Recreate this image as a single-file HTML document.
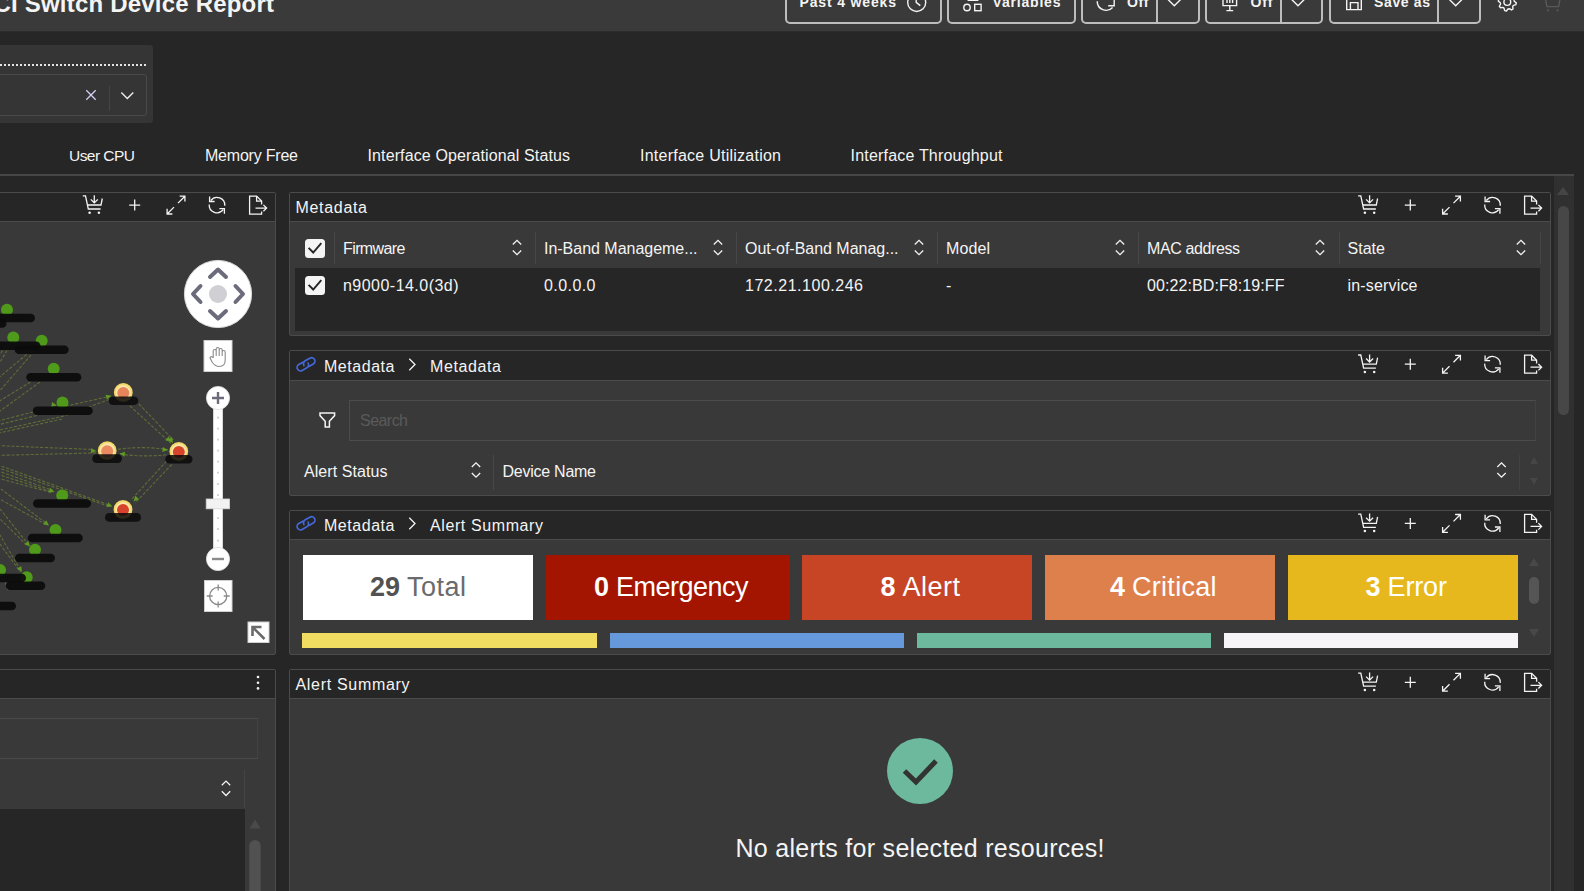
<!DOCTYPE html>
<html><head><meta charset="utf-8"><title>Switch Device Report</title>
<style>
html,body{margin:0;padding:0;background:#262626;}
body{width:1584px;height:891px;overflow:hidden;position:relative;font-family:"Liberation Sans",sans-serif;color:#f4f4f4;}
.t{position:absolute;white-space:pre;margin:0;}
.b{position:absolute;box-sizing:border-box;}
svg{position:absolute;overflow:visible;}
.ic{fill:none;stroke:#f4f4f4;stroke-width:1.25;stroke-linecap:butt;stroke-linejoin:miter;}
</style></head><body>
<div class="b" style="left:0px;top:0px;width:1584px;height:30.5px;background:#3a3a3a;"></div>
<div class="b" style="left:0px;top:30.5px;width:1584px;height:1.5px;background:linear-gradient(#303030,#262626);"></div>
<div class="t" style="left:-6.57px;top:-11.42px;font-size:24px;line-height:29px;font-weight:700;color:#f4f4f4;letter-spacing:0.205px;">CI Switch Device Report</div>
<div class="b" style="left:784.5px;top:-10px;width:157.0px;height:33.5px;border:2px solid #bdbdbd;border-radius:5px;"></div>
<div class="b" style="left:947px;top:-10px;width:128.5px;height:33.5px;border:2px solid #bdbdbd;border-radius:5px;"></div>
<div class="b" style="left:1081px;top:-10px;width:118.5px;height:33.5px;border:2px solid #bdbdbd;border-radius:5px;"></div>
<div class="b" style="left:1156px;top:-10px;width:2px;height:33px;background:#bdbdbd;"></div>
<div class="b" style="left:1205px;top:-10px;width:118px;height:33.5px;border:2px solid #bdbdbd;border-radius:5px;"></div>
<div class="b" style="left:1279.5px;top:-10px;width:2.0px;height:33px;background:#bdbdbd;"></div>
<div class="b" style="left:1328.5px;top:-10px;width:152.0px;height:33.5px;border:2px solid #bdbdbd;border-radius:5px;"></div>
<div class="b" style="left:1437px;top:-10px;width:2px;height:33px;background:#bdbdbd;"></div>
<div class="t" style="left:799.50px;top:-5.75px;font-size:14px;line-height:17px;font-weight:700;color:#f4f4f4;letter-spacing:0.848px;">Past 4 weeks</div>
<div class="t" style="left:992.50px;top:-5.75px;font-size:14px;line-height:17px;font-weight:700;color:#f4f4f4;letter-spacing:0.814px;">Variables</div>
<div class="t" style="left:1127.00px;top:-5.75px;font-size:14px;line-height:17px;font-weight:700;color:#f4f4f4;letter-spacing:0.643px;">Off</div>
<div class="t" style="left:1250.50px;top:-5.75px;font-size:14px;line-height:17px;font-weight:700;color:#f4f4f4;letter-spacing:0.893px;">Off</div>
<div class="t" style="left:1374.00px;top:-5.75px;font-size:14px;line-height:17px;font-weight:700;color:#f4f4f4;letter-spacing:0.640px;">Save as</div>
<svg style="left:0px;top:0px;overflow:hidden;" width="1584" height="30" viewBox="0.00 0.00 1584 30"><circle cx="916.7" cy="2.5" r="9" fill="none" stroke="#f4f4f4" stroke-width="1.4"/><path d="M916.2,-4 V2.3 L920.3,5.6" fill="none" stroke="#f4f4f4" stroke-width="1.4"/><circle cx="967" cy="7.5" r="3.2" fill="none" stroke="#f4f4f4" stroke-width="1.4"/><rect x="974.7" y="4.3" width="6.4" height="6.4" fill="none" stroke="#f4f4f4" stroke-width="1.4"/><path d="M968.5,0.2 H977.5 L973,-8 Z" fill="none" stroke="#f4f4f4" stroke-width="1.4"/><path d="M1097.2,1.2 A8.9,8.9 0 0 0 1112.6,7.4 M1114.2,-1 V5.8 H1108.2" fill="none" stroke="#f4f4f4" stroke-width="1.4"/><path d="M1168.0,-0.5 L1174.3,5.7 L1180.6,-0.5" fill="none" stroke="#f4f4f4" stroke-width="1.4"/><path d="M1291.7,-0.5 L1298,5.7 L1304.3,-0.5" fill="none" stroke="#f4f4f4" stroke-width="1.4"/><path d="M1449.4,-0.5 L1455.7,5.7 L1462.0,-0.5" fill="none" stroke="#f4f4f4" stroke-width="1.4"/><path d="M1223,-6 V5.6 H1236.6 V-6 M1229.8,5.6 V10.6 M1226.4,10.6 H1233.2 M1227,3 V-3 M1229.8,3 V0 M1232.6,3 V-2" fill="none" stroke="#f4f4f4" stroke-width="1.4"/><path d="M1346.7,-6 V9.6 H1361.3 V-6 M1350.4,9.6 V2.6 H1358 V9.6" fill="none" stroke="#f4f4f4" stroke-width="1.4"/><path d="M1516.26,2.88 L1515.91,4.61 L1513.47,5.30 L1512.71,6.44 L1513.01,8.96 L1511.54,9.94 L1509.33,8.70 L1507.99,8.97 L1506.42,10.96 L1504.69,10.61 L1504.00,8.17 L1502.86,7.41 L1500.34,7.71 L1499.36,6.24 L1500.60,4.03 L1500.33,2.69 L1498.34,1.12 L1498.69,-0.61 L1501.13,-1.30 L1501.89,-2.44 L1501.59,-4.96 L1503.06,-5.94 L1505.27,-4.70 L1506.61,-4.97 L1508.18,-6.96 L1509.91,-6.61 L1510.60,-4.17 L1511.74,-3.41 L1514.26,-3.71 L1515.24,-2.24 L1514.00,-0.03 L1514.27,1.31 Z" fill="none" stroke="#f4f4f4" stroke-width="1.4" stroke-linejoin="round"/><circle cx="1507.3" cy="2" r="3.4" fill="none" stroke="#f4f4f4" stroke-width="1.4"/><path d="M1545,-3 L1547,6.6 H1558.5 L1560.5,-3" fill="none" stroke="#595959" stroke-width="1.4"/><circle cx="1548" cy="10.3" r="1.1" fill="#595959"/><circle cx="1557.5" cy="10.3" r="1.1" fill="#595959"/></svg>
<div class="b" style="left:0px;top:45px;width:152.5px;height:78px;background:#353535;border-radius:0 3px 3px 0;"></div>
<div class="b" style="left:0px;top:63.5px;width:146px;height:2.0px;border-top:2px dotted #e4e4e4;"></div>
<div class="b" style="left:-6px;top:74px;width:152.5px;height:41.5px;border:1px solid #4a4a4a;border-radius:3px;"></div>
<div class="b" style="left:108.5px;top:86px;width:1.0px;height:25px;background:#454545;"></div>
<svg style="left:80px;top:84px;" width="60" height="24" viewBox="80.00 84.00 60 24"><path d="M86.3,90.3 L95.7,99.7 M95.7,90.3 L86.3,99.7" fill="none" stroke="#d4d0f4" stroke-width="1.3"/><path d="M121.3,92.5 L127.3,98.6 L133.3,92.5" fill="none" stroke="#ededed" stroke-width="1.4"/></svg>
<div class="t" style="left:69.00px;top:146.13px;font-size:15.5px;line-height:19px;font-weight:400;color:#f4f4f4;letter-spacing:-0.537px;">User CPU</div>
<div class="t" style="left:205.00px;top:145.96px;font-size:16px;line-height:19px;font-weight:400;color:#f4f4f4;letter-spacing:-0.213px;">Memory Free</div>
<div class="t" style="left:367.50px;top:145.96px;font-size:16px;line-height:19px;font-weight:400;color:#f4f4f4;letter-spacing:0.121px;">Interface Operational Status</div>
<div class="t" style="left:640.00px;top:145.96px;font-size:16px;line-height:19px;font-weight:400;color:#f4f4f4;letter-spacing:0.247px;">Interface Utilization</div>
<div class="t" style="left:850.50px;top:145.96px;font-size:16px;line-height:19px;font-weight:400;color:#f4f4f4;letter-spacing:0.197px;">Interface Throughput</div>
<div class="b" style="left:0px;top:174px;width:1573.5px;height:1.5px;background:#474747;"></div>
<div class="b" style="left:1553.5px;top:175.5px;width:20.0px;height:715.5px;background:#303030;"></div>
<div class="b" style="left:1557.5px;top:206px;width:11.5px;height:209px;background:#474747;border-radius:6px;"></div>
<svg style="left:1556px;top:186px;" width="14" height="10" viewBox="0.00 0.00 14 10"><path d="M7,1 L13,9 H1 Z" fill="#454545"/></svg>
<div class="b" style="left:-5px;top:192px;width:280.5px;height:462.5px;background:#393939;border:1px solid #4b4b4b;border-radius:2px;"></div>
<div class="b" style="left:-4px;top:193px;width:278.5px;height:29px;background:#262626;border-bottom:1px solid #4b4b4b;"></div>
<svg style="left:79px;top:191px;" width="192" height="29" viewBox="79.00 191.00 192 29"><g transform="translate(93,205.1)" fill="none" stroke="#f4f4f4" stroke-width="1.3"><path d="M-10.2,-9.2 H-7.5 L-4.7,3.9 H7.6 M-5.6,-0.1 H8 L9.3,-6.6"/><path d="M1.3,-9.8 V-2.2 M-2.2,-5.7 L1.3,-2.2 L4.8,-5.7"/><circle cx="-3.4" cy="7.7" r="1.25" fill="#f4f4f4" stroke="none"/><circle cx="5.9" cy="7.7" r="1.25" fill="#f4f4f4" stroke="none"/></g><path d="M129.2,205.1 H140.2 M134.7,199.6 V210.6" fill="none" stroke="#f4f4f4" stroke-width="1.3"/><g transform="translate(176,205.1)" fill="none" stroke="#f4f4f4" stroke-width="1.3"><path d="M2,-2 L8.9,-8.9 M3.6,-8.9 H8.9 V-3.6"/><path d="M-2,2 L-8.9,8.9 M-3.6,8.9 H-8.9 V3.6"/></g><g transform="translate(217,205.1)" fill="none" stroke="#f4f4f4" stroke-width="1.3"><path d="M-6.2,-4.6 A7.8,7.8 0 0 1 7.8,0.6"/><path d="M-7.4,-8.6 V-3.6 H-2.4"/><path d="M6.2,4.6 A7.8,7.8 0 0 1 -7.8,-0.6"/><path d="M7.4,8.6 V3.6 H2.4"/></g><g transform="translate(257,205.1)" fill="none" stroke="#f4f4f4" stroke-width="1.3"><path d="M4.6,-0.6 V-4 L-0.4,-9 H-7.4 V9 H4.6 V6.4"/><path d="M-0.4,-9 V-4 H4.6"/><path d="M-1.5,3 H9.6 M6.4,-0.2 L9.6,3 L6.4,6.2"/></g></svg>
<div class="b" style="left:289px;top:192px;width:1261.5px;height:144px;background:#393939;border:1px solid #4b4b4b;border-radius:2px;"></div>
<div class="b" style="left:290px;top:193px;width:1259.5px;height:29px;background:#262626;border-bottom:1px solid #4b4b4b;"></div>
<svg style="left:1354px;top:191px;" width="192" height="29" viewBox="1354.00 191.00 192 29"><g transform="translate(1368.3,205.1)" fill="none" stroke="#f4f4f4" stroke-width="1.3"><path d="M-10.2,-9.2 H-7.5 L-4.7,3.9 H7.6 M-5.6,-0.1 H8 L9.3,-6.6"/><path d="M1.3,-9.8 V-2.2 M-2.2,-5.7 L1.3,-2.2 L4.8,-5.7"/><circle cx="-3.4" cy="7.7" r="1.25" fill="#f4f4f4" stroke="none"/><circle cx="5.9" cy="7.7" r="1.25" fill="#f4f4f4" stroke="none"/></g><path d="M1404.8,205.1 H1415.8 M1410.3,199.6 V210.6" fill="none" stroke="#f4f4f4" stroke-width="1.3"/><g transform="translate(1451.5,205.1)" fill="none" stroke="#f4f4f4" stroke-width="1.3"><path d="M2,-2 L8.9,-8.9 M3.6,-8.9 H8.9 V-3.6"/><path d="M-2,2 L-8.9,8.9 M-3.6,8.9 H-8.9 V3.6"/></g><g transform="translate(1492.5,205.1)" fill="none" stroke="#f4f4f4" stroke-width="1.3"><path d="M-6.2,-4.6 A7.8,7.8 0 0 1 7.8,0.6"/><path d="M-7.4,-8.6 V-3.6 H-2.4"/><path d="M6.2,4.6 A7.8,7.8 0 0 1 -7.8,-0.6"/><path d="M7.4,8.6 V3.6 H2.4"/></g><g transform="translate(1532,205.1)" fill="none" stroke="#f4f4f4" stroke-width="1.3"><path d="M4.6,-0.6 V-4 L-0.4,-9 H-7.4 V9 H4.6 V6.4"/><path d="M-0.4,-9 V-4 H4.6"/><path d="M-1.5,3 H9.6 M6.4,-0.2 L9.6,3 L6.4,6.2"/></g></svg>
<div class="t" style="left:295.50px;top:197.96px;font-size:16px;line-height:19px;font-weight:400;color:#f4f4f4;letter-spacing:0.684px;">Metadata</div>
<div class="b" style="left:289px;top:350px;width:1261.5px;height:146px;background:#393939;border:1px solid #4b4b4b;border-radius:2px;"></div>
<div class="b" style="left:290px;top:351px;width:1259.5px;height:29.5px;background:#262626;border-bottom:1px solid #4b4b4b;"></div>
<svg style="left:1354px;top:350px;" width="192" height="29" viewBox="1354.00 350.00 192 29"><g transform="translate(1368.3,364.2)" fill="none" stroke="#f4f4f4" stroke-width="1.3"><path d="M-10.2,-9.2 H-7.5 L-4.7,3.9 H7.6 M-5.6,-0.1 H8 L9.3,-6.6"/><path d="M1.3,-9.8 V-2.2 M-2.2,-5.7 L1.3,-2.2 L4.8,-5.7"/><circle cx="-3.4" cy="7.7" r="1.25" fill="#f4f4f4" stroke="none"/><circle cx="5.9" cy="7.7" r="1.25" fill="#f4f4f4" stroke="none"/></g><path d="M1404.8,364.2 H1415.8 M1410.3,358.7 V369.7" fill="none" stroke="#f4f4f4" stroke-width="1.3"/><g transform="translate(1451.5,364.2)" fill="none" stroke="#f4f4f4" stroke-width="1.3"><path d="M2,-2 L8.9,-8.9 M3.6,-8.9 H8.9 V-3.6"/><path d="M-2,2 L-8.9,8.9 M-3.6,8.9 H-8.9 V3.6"/></g><g transform="translate(1492.5,364.2)" fill="none" stroke="#f4f4f4" stroke-width="1.3"><path d="M-6.2,-4.6 A7.8,7.8 0 0 1 7.8,0.6"/><path d="M-7.4,-8.6 V-3.6 H-2.4"/><path d="M6.2,4.6 A7.8,7.8 0 0 1 -7.8,-0.6"/><path d="M7.4,8.6 V3.6 H2.4"/></g><g transform="translate(1532,364.2)" fill="none" stroke="#f4f4f4" stroke-width="1.3"><path d="M4.6,-0.6 V-4 L-0.4,-9 H-7.4 V9 H4.6 V6.4"/><path d="M-0.4,-9 V-4 H4.6"/><path d="M-1.5,3 H9.6 M6.4,-0.2 L9.6,3 L6.4,6.2"/></g></svg>
<div class="b" style="left:289px;top:510px;width:1261.5px;height:145px;background:#393939;border:1px solid #4b4b4b;border-radius:2px;"></div>
<div class="b" style="left:290px;top:511px;width:1259.5px;height:28.5px;background:#262626;border-bottom:1px solid #4b4b4b;"></div>
<svg style="left:1354px;top:509px;" width="192" height="29" viewBox="1354.00 509.00 192 29"><g transform="translate(1368.3,523.4)" fill="none" stroke="#f4f4f4" stroke-width="1.3"><path d="M-10.2,-9.2 H-7.5 L-4.7,3.9 H7.6 M-5.6,-0.1 H8 L9.3,-6.6"/><path d="M1.3,-9.8 V-2.2 M-2.2,-5.7 L1.3,-2.2 L4.8,-5.7"/><circle cx="-3.4" cy="7.7" r="1.25" fill="#f4f4f4" stroke="none"/><circle cx="5.9" cy="7.7" r="1.25" fill="#f4f4f4" stroke="none"/></g><path d="M1404.8,523.4 H1415.8 M1410.3,517.9 V528.9" fill="none" stroke="#f4f4f4" stroke-width="1.3"/><g transform="translate(1451.5,523.4)" fill="none" stroke="#f4f4f4" stroke-width="1.3"><path d="M2,-2 L8.9,-8.9 M3.6,-8.9 H8.9 V-3.6"/><path d="M-2,2 L-8.9,8.9 M-3.6,8.9 H-8.9 V3.6"/></g><g transform="translate(1492.5,523.4)" fill="none" stroke="#f4f4f4" stroke-width="1.3"><path d="M-6.2,-4.6 A7.8,7.8 0 0 1 7.8,0.6"/><path d="M-7.4,-8.6 V-3.6 H-2.4"/><path d="M6.2,4.6 A7.8,7.8 0 0 1 -7.8,-0.6"/><path d="M7.4,8.6 V3.6 H2.4"/></g><g transform="translate(1532,523.4)" fill="none" stroke="#f4f4f4" stroke-width="1.3"><path d="M4.6,-0.6 V-4 L-0.4,-9 H-7.4 V9 H4.6 V6.4"/><path d="M-0.4,-9 V-4 H4.6"/><path d="M-1.5,3 H9.6 M6.4,-0.2 L9.6,3 L6.4,6.2"/></g></svg>
<div class="b" style="left:289px;top:668.5px;width:1261.5px;height:231.5px;background:#393939;border:1px solid #4b4b4b;border-radius:2px;"></div>
<div class="b" style="left:290px;top:669.5px;width:1259.5px;height:29.5px;background:#262626;border-bottom:1px solid #4b4b4b;"></div>
<svg style="left:1354px;top:668px;" width="192" height="29" viewBox="1354.00 668.00 192 29"><g transform="translate(1368.3,682.3)" fill="none" stroke="#f4f4f4" stroke-width="1.3"><path d="M-10.2,-9.2 H-7.5 L-4.7,3.9 H7.6 M-5.6,-0.1 H8 L9.3,-6.6"/><path d="M1.3,-9.8 V-2.2 M-2.2,-5.7 L1.3,-2.2 L4.8,-5.7"/><circle cx="-3.4" cy="7.7" r="1.25" fill="#f4f4f4" stroke="none"/><circle cx="5.9" cy="7.7" r="1.25" fill="#f4f4f4" stroke="none"/></g><path d="M1404.8,682.3 H1415.8 M1410.3,676.8 V687.8" fill="none" stroke="#f4f4f4" stroke-width="1.3"/><g transform="translate(1451.5,682.3)" fill="none" stroke="#f4f4f4" stroke-width="1.3"><path d="M2,-2 L8.9,-8.9 M3.6,-8.9 H8.9 V-3.6"/><path d="M-2,2 L-8.9,8.9 M-3.6,8.9 H-8.9 V3.6"/></g><g transform="translate(1492.5,682.3)" fill="none" stroke="#f4f4f4" stroke-width="1.3"><path d="M-6.2,-4.6 A7.8,7.8 0 0 1 7.8,0.6"/><path d="M-7.4,-8.6 V-3.6 H-2.4"/><path d="M6.2,4.6 A7.8,7.8 0 0 1 -7.8,-0.6"/><path d="M7.4,8.6 V3.6 H2.4"/></g><g transform="translate(1532,682.3)" fill="none" stroke="#f4f4f4" stroke-width="1.3"><path d="M4.6,-0.6 V-4 L-0.4,-9 H-7.4 V9 H4.6 V6.4"/><path d="M-0.4,-9 V-4 H4.6"/><path d="M-1.5,3 H9.6 M6.4,-0.2 L9.6,3 L6.4,6.2"/></g></svg>
<div class="t" style="left:295.50px;top:674.96px;font-size:16px;line-height:19px;font-weight:400;color:#f4f4f4;letter-spacing:0.684px;">Alert Summary</div>
<div class="b" style="left:-5px;top:668.5px;width:280.5px;height:231.5px;background:#393939;border:1px solid #4b4b4b;border-radius:2px;"></div>
<div class="b" style="left:-4px;top:669.5px;width:278.5px;height:29.5px;background:#262626;border-bottom:1px solid #4b4b4b;"></div>
<div class="b" style="left:295px;top:267.5px;width:1245px;height:63.0px;background:#262626;"></div>
<div class="b" style="left:305px;top:238.5px;width:19.5px;height:19.5px;background:#f4f4f4;border-radius:3.5px;"></div>
<svg style="left:305px;top:238px;" width="20" height="21" viewBox="0.00 -0.50 20 21"><path d="M3.6,9.3 L8.2,14 L16.3,4.6" fill="none" stroke="#262626" stroke-width="1.9"/></svg>
<div class="b" style="left:305px;top:275.5px;width:19.5px;height:19.5px;background:#f4f4f4;border-radius:3.5px;"></div>
<svg style="left:305px;top:275px;" width="20" height="21" viewBox="0.00 -0.50 20 21"><path d="M3.6,9.3 L8.2,14 L16.3,4.6" fill="none" stroke="#262626" stroke-width="1.9"/></svg>
<div class="b" style="left:334px;top:232px;width:1px;height:32px;background:#474747;"></div>
<div class="t" style="left:343.00px;top:238.96px;font-size:16px;line-height:19px;font-weight:400;color:#f4f4f4;letter-spacing:-0.595px;">Firmware</div>
<svg style="left:511px;top:238px;" width="12" height="19" viewBox="511.00 238.00 12 19"><path d="M512.8,244.5 L517,240.3 L521.2,244.5 M512.8,250.5 L517,254.7 L521.2,250.5" fill="none" stroke="#f4f4f4" stroke-width="1.3"/></svg>
<div class="b" style="left:535px;top:232px;width:1px;height:32px;background:#474747;"></div>
<div class="t" style="left:544.00px;top:238.96px;font-size:16px;line-height:19px;font-weight:400;color:#f4f4f4;letter-spacing:-0.020px;">In-Band Manageme...</div>
<svg style="left:712px;top:238px;" width="12" height="19" viewBox="712.00 238.00 12 19"><path d="M713.8,244.5 L718,240.3 L722.2,244.5 M713.8,250.5 L718,254.7 L722.2,250.5" fill="none" stroke="#f4f4f4" stroke-width="1.3"/></svg>
<div class="b" style="left:736px;top:232px;width:1px;height:32px;background:#474747;"></div>
<div class="t" style="left:745.00px;top:238.96px;font-size:16px;line-height:19px;font-weight:400;color:#f4f4f4;letter-spacing:-0.019px;">Out-of-Band Manag...</div>
<svg style="left:913px;top:238px;" width="12" height="19" viewBox="913.00 238.00 12 19"><path d="M914.8,244.5 L919,240.3 L923.2,244.5 M914.8,250.5 L919,254.7 L923.2,250.5" fill="none" stroke="#f4f4f4" stroke-width="1.3"/></svg>
<div class="b" style="left:937px;top:232px;width:1px;height:32px;background:#474747;"></div>
<div class="t" style="left:946.00px;top:238.96px;font-size:16px;line-height:19px;font-weight:400;color:#f4f4f4;letter-spacing:0.105px;">Model</div>
<svg style="left:1114px;top:238px;" width="12" height="19" viewBox="1114.00 238.00 12 19"><path d="M1115.8,244.5 L1120,240.3 L1124.2,244.5 M1115.8,250.5 L1120,254.7 L1124.2,250.5" fill="none" stroke="#f4f4f4" stroke-width="1.3"/></svg>
<div class="b" style="left:1138px;top:232px;width:1px;height:32px;background:#474747;"></div>
<div class="t" style="left:1147.00px;top:238.96px;font-size:16px;line-height:19px;font-weight:400;color:#f4f4f4;letter-spacing:-0.392px;">MAC address</div>
<svg style="left:1314px;top:238px;" width="12" height="19" viewBox="1314.00 238.00 12 19"><path d="M1315.8,244.5 L1320,240.3 L1324.2,244.5 M1315.8,250.5 L1320,254.7 L1324.2,250.5" fill="none" stroke="#f4f4f4" stroke-width="1.3"/></svg>
<div class="b" style="left:1339px;top:232px;width:1px;height:32px;background:#474747;"></div>
<div class="t" style="left:1347.50px;top:238.96px;font-size:16px;line-height:19px;font-weight:400;color:#f4f4f4;letter-spacing:0.035px;">State</div>
<svg style="left:1515px;top:238px;" width="12" height="19" viewBox="1515.00 238.00 12 19"><path d="M1516.8,244.5 L1521,240.3 L1525.2,244.5 M1516.8,250.5 L1521,254.7 L1525.2,250.5" fill="none" stroke="#f4f4f4" stroke-width="1.3"/></svg>
<div class="b" style="left:1540px;top:232px;width:1px;height:32px;background:#474747;"></div>
<div class="t" style="left:343.00px;top:275.96px;font-size:16px;line-height:19px;font-weight:400;color:#f4f4f4;letter-spacing:0.468px;">n9000-14.0(3d)</div>
<div class="t" style="left:544.00px;top:275.96px;font-size:16px;line-height:19px;font-weight:400;color:#f4f4f4;letter-spacing:0.428px;">0.0.0.0</div>
<div class="t" style="left:745.00px;top:275.96px;font-size:16px;line-height:19px;font-weight:400;color:#f4f4f4;letter-spacing:0.522px;">172.21.100.246</div>
<div class="t" style="left:946.00px;top:275.96px;font-size:16px;line-height:19px;font-weight:400;color:#f4f4f4;letter-spacing:0.000px;">-</div>
<div class="t" style="left:1147.00px;top:275.96px;font-size:16px;line-height:19px;font-weight:400;color:#f4f4f4;letter-spacing:0.090px;">00:22:BD:F8:19:FF</div>
<div class="t" style="left:1347.50px;top:275.96px;font-size:16px;line-height:19px;font-weight:400;color:#f4f4f4;letter-spacing:0.171px;">in-service</div>
<svg style="left:293px;top:353px;" width="26" height="23" viewBox="293.00 353.00 26 23"><g transform="translate(306,364.3) rotate(-30)" fill="none" stroke="#4468d8" stroke-width="1.7" stroke-linecap="round"><path d="M-1.6,-3.4 H-6.4 A3.4,3.4 0 0 0 -6.4,3.4 H-1 A3.4,3.4 0 0 0 2.4,0"/><path d="M1.6,3.4 H6.4 A3.4,3.4 0 0 0 6.4,-3.4 H1 A3.4,3.4 0 0 0 -2.4,0"/></g></svg>
<div class="t" style="left:324.00px;top:357.16px;font-size:16px;line-height:19px;font-weight:400;color:#f4f4f4;letter-spacing:0.541px;">Metadata</div>
<svg style="left:405px;top:356px;" width="14" height="17" viewBox="0.00 -0.50 14 17"><path d="M4.3,2.3 L10,8 L4.3,13.7" fill="none" stroke="#f4f4f4" stroke-width="1.3"/></svg>
<div class="t" style="left:430.00px;top:357.16px;font-size:16px;line-height:19px;font-weight:400;color:#f4f4f4;letter-spacing:0.613px;">Metadata</div>
<svg style="left:317px;top:409px;" width="20" height="22" viewBox="0.00 0.00 20 22"><path d="M3,4 H17.6 V6.6 L12.4,12.2 V18 H8.2 V12.2 L3,6.6 Z" fill="none" stroke="#f4f4f4" stroke-width="1.5" stroke-linejoin="miter"/></svg>
<div class="b" style="left:348.5px;top:399.5px;width:1187.5px;height:41.5px;border:1px solid #4c4c4c;border-right-color:#424242;"></div>
<div class="t" style="left:360.00px;top:411.46px;font-size:16px;line-height:19px;font-weight:400;color:#5a5a5a;letter-spacing:-0.539px;">Search</div>
<div class="t" style="left:304.00px;top:461.96px;font-size:16px;line-height:19px;font-weight:400;color:#f4f4f4;letter-spacing:0.072px;">Alert Status</div>
<svg style="left:470px;top:461px;" width="12" height="18" viewBox="470.00 461.00 12 18"><path d="M471.8,467 L476,462.8 L480.2,467 M471.8,473 L476,477.2 L480.2,473" fill="none" stroke="#f4f4f4" stroke-width="1.3"/></svg>
<div class="b" style="left:493px;top:455px;width:1px;height:35px;background:#474747;"></div>
<div class="t" style="left:502.50px;top:461.96px;font-size:16px;line-height:19px;font-weight:400;color:#f4f4f4;letter-spacing:-0.253px;">Device Name</div>
<svg style="left:1495px;top:461px;" width="13" height="18" viewBox="1495.00 461.00 13 18"><path d="M1497.3,467 L1501.5,462.8 L1505.7,467 M1497.3,473 L1501.5,477.2 L1505.7,473" fill="none" stroke="#f4f4f4" stroke-width="1.3"/></svg>
<div class="b" style="left:1519px;top:455px;width:1px;height:35px;background:#424242;"></div>
<svg style="left:1528px;top:455px;" width="12" height="32" viewBox="0.00 0.00 12 32"><path d="M6,2 L10,9 H2 Z M6,30 L10,23 H2 Z" fill="#464646"/></svg>
<svg style="left:293px;top:512px;" width="26" height="23" viewBox="293.00 512.00 26 23"><g transform="translate(306,523.3) rotate(-30)" fill="none" stroke="#4468d8" stroke-width="1.7" stroke-linecap="round"><path d="M-1.6,-3.4 H-6.4 A3.4,3.4 0 0 0 -6.4,3.4 H-1 A3.4,3.4 0 0 0 2.4,0"/><path d="M1.6,3.4 H6.4 A3.4,3.4 0 0 0 6.4,-3.4 H1 A3.4,3.4 0 0 0 -2.4,0"/></g></svg>
<div class="t" style="left:324.00px;top:516.16px;font-size:16px;line-height:19px;font-weight:400;color:#f4f4f4;letter-spacing:0.541px;">Metadata</div>
<svg style="left:405px;top:515px;" width="14" height="17" viewBox="0.00 -0.50 14 17"><path d="M4.3,2.3 L10,8 L4.3,13.7" fill="none" stroke="#f4f4f4" stroke-width="1.3"/></svg>
<div class="t" style="left:430.00px;top:516.16px;font-size:16px;line-height:19px;font-weight:400;color:#f4f4f4;letter-spacing:0.600px;">Alert Summary</div>
<div class="b" style="left:302.5px;top:554.5px;width:230.5px;height:65.0px;background:#ffffff;"></div>
<div class="t" style="left:370.00px;top:571.24px;font-size:27px;line-height:32px;font-weight:700;color:#525252;letter-spacing:0.000px;">29</div>
<div class="t" style="left:407.03px;top:571.24px;font-size:27px;line-height:32px;font-weight:400;color:#6b6b6b;letter-spacing:0.484px;">Total</div>
<div class="b" style="left:546px;top:554.5px;width:243.5px;height:65.0px;background:#a31500;"></div>
<div class="t" style="left:594.00px;top:571.24px;font-size:27px;line-height:32px;font-weight:700;color:#ffffff;letter-spacing:0.000px;">0</div>
<div class="t" style="left:616.02px;top:571.24px;font-size:27px;line-height:32px;font-weight:400;color:#ffffff;letter-spacing:-0.509px;">Emergency</div>
<div class="b" style="left:802px;top:554.5px;width:229.5px;height:65.0px;background:#c74425;"></div>
<div class="t" style="left:880.50px;top:571.24px;font-size:27px;line-height:32px;font-weight:700;color:#ffffff;letter-spacing:0.000px;">8</div>
<div class="t" style="left:902.52px;top:571.24px;font-size:27px;line-height:32px;font-weight:400;color:#ffffff;letter-spacing:0.492px;">Alert</div>
<div class="b" style="left:1044.5px;top:554.5px;width:230.5px;height:65.0px;background:#de804c;"></div>
<div class="t" style="left:1110.00px;top:571.24px;font-size:27px;line-height:32px;font-weight:700;color:#ffffff;letter-spacing:0.000px;">4</div>
<div class="t" style="left:1132.02px;top:571.24px;font-size:27px;line-height:32px;font-weight:400;color:#ffffff;letter-spacing:0.283px;">Critical</div>
<div class="b" style="left:1288px;top:554.5px;width:229.5px;height:65.0px;background:#e6b81d;"></div>
<div class="t" style="left:1365.50px;top:571.24px;font-size:27px;line-height:32px;font-weight:700;color:#ffffff;letter-spacing:0.000px;">3</div>
<div class="t" style="left:1387.52px;top:571.24px;font-size:27px;line-height:32px;font-weight:400;color:#ffffff;letter-spacing:-0.129px;">Error</div>
<div class="b" style="left:302px;top:633px;width:294.5px;height:15px;background:#f0dc60;"></div>
<div class="b" style="left:609.5px;top:633px;width:294.5px;height:15px;background:#6699dc;"></div>
<div class="b" style="left:916.5px;top:633px;width:294.5px;height:15px;background:#6cb99e;"></div>
<div class="b" style="left:1224px;top:633px;width:293.5px;height:15px;background:#f6f4f6;"></div>
<svg style="left:1527px;top:555px;" width="14" height="86" viewBox="0.00 0.00 14 86"><path d="M7,3 L12,11 H2 Z M7,82 L12,74 H2 Z" fill="#484848"/><rect x="2" y="22" width="10" height="27" rx="5" fill="#555555"/></svg>
<div class="b" style="left:887px;top:737.5px;width:66px;height:66.0px;background:#6cb99e;border-radius:50%;"></div>
<svg style="left:887px;top:737px;" width="66" height="67" viewBox="0.00 -0.50 66 67"><path d="M17.5,33.5 L29,44.5 L49,23.5" fill="none" stroke="#333333" stroke-width="5"/></svg>
<div class="t" style="left:735.50px;top:833.34px;font-size:25px;line-height:30px;font-weight:400;color:#f4f4f4;letter-spacing:0.285px;">No alerts for selected resources!</div>
<svg style="left:0px;top:223px;overflow:hidden;" width="275" height="431" viewBox="0.00 223.00 275 431"><path d="M7,350.5 L-3,367" fill="none" stroke="#86a038" stroke-opacity="0.5" stroke-width="1.1" stroke-dasharray="3.2,1.6"/><path d="M26.7,354.4 L-3,379.2" fill="none" stroke="#86a038" stroke-opacity="0.5" stroke-width="1.1" stroke-dasharray="3.2,1.6"/><path d="M31,355 L-3,394" fill="none" stroke="#86a038" stroke-opacity="0.5" stroke-width="1.1" stroke-dasharray="3.2,1.6"/><path d="M30.5,382 L-3,402.6" fill="none" stroke="#86a038" stroke-opacity="0.5" stroke-width="1.1" stroke-dasharray="3.2,1.6"/><path d="M40,382 L-3,413.2" fill="none" stroke="#86a038" stroke-opacity="0.5" stroke-width="1.1" stroke-dasharray="3.2,1.6"/><path d="M33,412 L-3,421.3" fill="none" stroke="#86a038" stroke-opacity="0.5" stroke-width="1.1" stroke-dasharray="3.2,1.6"/><path d="M36.7,415.5 L-3,425.1" fill="none" stroke="#86a038" stroke-opacity="0.5" stroke-width="1.1" stroke-dasharray="3.2,1.6"/><path d="M64,416 L-3,430.6" fill="none" stroke="#86a038" stroke-opacity="0.5" stroke-width="1.1" stroke-dasharray="3.2,1.6"/><path d="M62,419 L-3,433.5" fill="none" stroke="#86a038" stroke-opacity="0.5" stroke-width="1.1" stroke-dasharray="3.2,1.6"/><path d="M2.5,350.5 L-3,359" fill="none" stroke="#86a038" stroke-opacity="0.5" stroke-width="1.1" stroke-dasharray="3.2,1.6"/><path d="M111,396 L56,408.4" fill="none" stroke="#86a038" stroke-opacity="0.5" stroke-width="1.1" stroke-dasharray="3.2,1.6"/><path d="M109.4,399.4 L64,416" fill="none" stroke="#86a038" stroke-opacity="0.5" stroke-width="1.1" stroke-dasharray="3.2,1.6"/><path d="M130,406 L171,443.4" fill="none" stroke="#86a038" stroke-opacity="0.5" stroke-width="1.1" stroke-dasharray="3.2,1.6"/><path d="M139,404 L173.3,440" fill="none" stroke="#86a038" stroke-opacity="0.5" stroke-width="1.1" stroke-dasharray="3.2,1.6"/><path d="M-3,445.6 L93.3,449.5" fill="none" stroke="#86a038" stroke-opacity="0.5" stroke-width="1.1" stroke-dasharray="3.2,1.6"/><path d="M-3,455.4 L96.7,452.9" fill="none" stroke="#86a038" stroke-opacity="0.5" stroke-width="1.1" stroke-dasharray="3.2,1.6"/><path d="M166.7,461 L131,500" fill="none" stroke="#86a038" stroke-opacity="0.5" stroke-width="1.1" stroke-dasharray="3.2,1.6"/><path d="M171.7,464.5 L135,503" fill="none" stroke="#86a038" stroke-opacity="0.5" stroke-width="1.1" stroke-dasharray="3.2,1.6"/><path d="M-3,464.6 L111,505.7" fill="none" stroke="#86a038" stroke-opacity="0.5" stroke-width="1.1" stroke-dasharray="3.2,1.6"/><path d="M-3,467.3 L110,506.8" fill="none" stroke="#86a038" stroke-opacity="0.5" stroke-width="1.1" stroke-dasharray="3.2,1.6"/><path d="M-3,474 L52.2,491.8" fill="none" stroke="#86a038" stroke-opacity="0.5" stroke-width="1.1" stroke-dasharray="3.2,1.6"/><path d="M-3,478 L52,492.6" fill="none" stroke="#86a038" stroke-opacity="0.5" stroke-width="1.1" stroke-dasharray="3.2,1.6"/><path d="M-3,470.5 L53,490.5" fill="none" stroke="#86a038" stroke-opacity="0.5" stroke-width="1.1" stroke-dasharray="3.2,1.6"/><path d="M-3,486 L47.8,524.5" fill="none" stroke="#86a038" stroke-opacity="0.5" stroke-width="1.1" stroke-dasharray="3.2,1.6"/><path d="M-3,497.5 L47.8,525.5" fill="none" stroke="#86a038" stroke-opacity="0.5" stroke-width="1.1" stroke-dasharray="3.2,1.6"/><path d="M-3,505 L29,545.5" fill="none" stroke="#86a038" stroke-opacity="0.5" stroke-width="1.1" stroke-dasharray="3.2,1.6"/><path d="M-3,516 L28,546.5" fill="none" stroke="#86a038" stroke-opacity="0.5" stroke-width="1.1" stroke-dasharray="3.2,1.6"/><path d="M-3,530 L21,571" fill="none" stroke="#86a038" stroke-opacity="0.5" stroke-width="1.1" stroke-dasharray="3.2,1.6"/><path d="M-3,540 L20.5,572" fill="none" stroke="#86a038" stroke-opacity="0.5" stroke-width="1.1" stroke-dasharray="3.2,1.6"/><path d="M-3,560 L8,590" fill="none" stroke="#86a038" stroke-opacity="0.5" stroke-width="1.1" stroke-dasharray="3.2,1.6"/><path d="M-3,523 L-1,565" fill="none" stroke="#86a038" stroke-opacity="0.5" stroke-width="1.1" stroke-dasharray="3.2,1.6"/><path d="M117.8,449.3 Q143,445.8 168,449.6" fill="none" stroke="#86a038" stroke-opacity="0.5" stroke-width="1.1" stroke-dasharray="3.2,1.6"/><path d="M120,454 Q144,457.5 168,454.6" fill="none" stroke="#86a038" stroke-opacity="0.5" stroke-width="1.1" stroke-dasharray="3.2,1.6"/><path transform="translate(96.5,451) rotate(2)" d="M0,0 L-5.44,-2.5600000000000005 L-5.44,2.5600000000000005 Z" fill="#5e9a22"/><path transform="translate(111.5,395.8) rotate(-14)" d="M0,0 L-5.44,-2.5600000000000005 L-5.44,2.5600000000000005 Z" fill="#5e9a22"/><path transform="translate(57,405.5) rotate(10)" d="M0,0 L-5.44,-2.5600000000000005 L-5.44,2.5600000000000005 Z" fill="#5e9a22"/><path transform="translate(168,450) rotate(6)" d="M0,0 L-5.44,-2.5600000000000005 L-5.44,2.5600000000000005 Z" fill="#5e9a22"/><path transform="translate(119.5,453.5) rotate(188)" d="M0,0 L-5.44,-2.5600000000000005 L-5.44,2.5600000000000005 Z" fill="#5e9a22"/><path transform="translate(173,443) rotate(55)" d="M0,0 L-5.44,-2.5600000000000005 L-5.44,2.5600000000000005 Z" fill="#5e9a22"/><path transform="translate(171,442) rotate(42)" d="M0,0 L-5.44,-2.5600000000000005 L-5.44,2.5600000000000005 Z" fill="#5e9a22"/><path transform="translate(133.5,501.5) rotate(133)" d="M0,0 L-5.44,-2.5600000000000005 L-5.44,2.5600000000000005 Z" fill="#5e9a22"/><path transform="translate(112.5,506.5) rotate(20)" d="M0,0 L-5.44,-2.5600000000000005 L-5.44,2.5600000000000005 Z" fill="#5e9a22"/><path transform="translate(54.5,492) rotate(20)" d="M0,0 L-5.44,-2.5600000000000005 L-5.44,2.5600000000000005 Z" fill="#5e9a22"/><path transform="translate(49,525.5) rotate(38)" d="M0,0 L-5.44,-2.5600000000000005 L-5.44,2.5600000000000005 Z" fill="#5e9a22"/><path transform="translate(30,546.5) rotate(48)" d="M0,0 L-5.44,-2.5600000000000005 L-5.44,2.5600000000000005 Z" fill="#5e9a22"/><path transform="translate(22,572) rotate(58)" d="M0,0 L-5.44,-2.5600000000000005 L-5.44,2.5600000000000005 Z" fill="#5e9a22"/><circle cx="7" cy="309.7" r="6" fill="#4f9a1a"/><circle cx="13.3" cy="337.5" r="6" fill="#4f9a1a"/><circle cx="41.7" cy="340.8" r="6" fill="#4f9a1a"/><circle cx="53.7" cy="368.7" r="6" fill="#4f9a1a"/><circle cx="62.5" cy="402.5" r="6" fill="#4f9a1a"/><circle cx="62.2" cy="495.4" r="6" fill="#4f9a1a"/><circle cx="55.5" cy="530" r="6" fill="#4f9a1a"/><circle cx="35" cy="549.8" r="6" fill="#4f9a1a"/><circle cx="0" cy="570" r="6" fill="#4f9a1a"/><circle cx="26.7" cy="577.3" r="6" fill="#4f9a1a"/><circle cx="123.3" cy="392.5" r="9.4" fill="#f3d768"/><circle cx="123.3" cy="392.5" r="7.6" fill="#f8e7a6"/><circle cx="123.3" cy="393.1" r="6" fill="#e8845a"/><circle cx="107.2" cy="450.7" r="9.4" fill="#f3d768"/><circle cx="107.2" cy="450.7" r="7.6" fill="#f8e7a6"/><circle cx="107.2" cy="451.3" r="6" fill="#ea8a60"/><circle cx="178.8" cy="451.5" r="9.4" fill="#f3d768"/><circle cx="178.8" cy="451.5" r="7.6" fill="#f8e7a6"/><circle cx="178.8" cy="452.1" r="6" fill="#d8432b"/><circle cx="123" cy="509.5" r="9.4" fill="#f3d768"/><circle cx="123" cy="509.5" r="7.6" fill="#f8e7a6"/><circle cx="123" cy="510.1" r="6" fill="#d8432b"/><rect x="-5" y="313.7" width="40" height="8.6" rx="4.3" fill="#0b0b0b" fill-opacity="0.93"/><rect x="-5" y="319.2" width="11.5" height="8.6" rx="4.3" fill="#0b0b0b" fill-opacity="0.93"/><rect x="-5" y="341.5" width="45.5" height="8.6" rx="4.3" fill="#0b0b0b" fill-opacity="0.93"/><rect x="14.7" y="345.4" width="54.0" height="8.6" rx="4.3" fill="#0b0b0b" fill-opacity="0.93"/><rect x="26.3" y="373.0" width="55.0" height="8.6" rx="4.3" fill="#0b0b0b" fill-opacity="0.93"/><rect x="32.8" y="406.5" width="60.0" height="8.6" rx="4.3" fill="#0b0b0b" fill-opacity="0.93"/><rect x="33" y="499.2" width="58" height="8.6" rx="4.3" fill="#0b0b0b" fill-opacity="0.93"/><rect x="27.8" y="533.7" width="55.0" height="8.6" rx="4.3" fill="#0b0b0b" fill-opacity="0.93"/><rect x="15" y="553.7" width="40" height="8.6" rx="4.3" fill="#0b0b0b" fill-opacity="0.93"/><rect x="-5" y="573.7" width="31" height="8.6" rx="4.3" fill="#0b0b0b" fill-opacity="0.93"/><rect x="5.8" y="581.5" width="39.5" height="8.6" rx="4.3" fill="#0b0b0b" fill-opacity="0.93"/><rect x="-5" y="601.7" width="21" height="8.6" rx="4.3" fill="#0b0b0b" fill-opacity="0.93"/><rect x="108.7" y="396.5" width="29.60000000000001" height="8.6" rx="4.3" fill="#0b0b0b" fill-opacity="0.86"/><rect x="92.2" y="454.3" width="29.799999999999997" height="8.6" rx="4.3" fill="#0b0b0b" fill-opacity="0.86"/><rect x="165.3" y="454.9" width="27.19999999999999" height="8.6" rx="4.3" fill="#0b0b0b" fill-opacity="0.86"/><rect x="105" y="513.1" width="36" height="8.6" rx="4.3" fill="#0b0b0b" fill-opacity="0.86"/><circle cx="218" cy="294" r="33.6" fill="#ffffff" stroke="#d8d8d8" stroke-width="1"/><circle cx="218" cy="294" r="9" fill="#cfcfd4"/><path d="M210,277 L218,269.5 L226,277 M210,311 L218,318.5 L226,311 M200.5,286 L193,294 L200.5,302 M235.5,286 L243,294 L235.5,302" fill="none" stroke="#6b6b7b" stroke-width="4" stroke-linejoin="round" stroke-linecap="round"/><rect x="204" y="340.5" width="28" height="31" fill="#ffffff" stroke="#d0d0d0" stroke-width="1"/><path d="M213.2,357.5 V351 a1.5,1.5 0 0 1 3,0 V349 a1.5,1.5 0 0 1 3,0 V350 a1.5,1.5 0 0 1 3,0 V352 a1.5,1.5 0 0 1 3,0 V360 c0,4 -2,6.5 -6,6.5 c-3.5,0 -4.8,-1.2 -6.8,-4 L210.3,358.6 c-0.9,-1.3 0.9,-2.6 2,-1.4 Z M216.2,351 V356 M219.2,350 V356 M222.2,351.5 V356" fill="none" stroke="#8a8a8a" stroke-width="1.1" stroke-linejoin="round"/><rect x="213.2" y="405" width="9.6" height="148" fill="#ffffff"/><rect x="217" y="416.7" width="2" height="1.8" fill="#d0d0d8"/><rect x="217" y="427.7" width="2" height="1.8" fill="#d0d0d8"/><rect x="217" y="438.7" width="2" height="1.8" fill="#d0d0d8"/><rect x="217" y="449.7" width="2" height="1.8" fill="#d0d0d8"/><rect x="217" y="460.7" width="2" height="1.8" fill="#d0d0d8"/><rect x="217" y="471.7" width="2" height="1.8" fill="#d0d0d8"/><rect x="217" y="483.2" width="2" height="1.8" fill="#d0d0d8"/><rect x="217" y="494.2" width="2" height="1.8" fill="#d0d0d8"/><rect x="217" y="517.2" width="2" height="1.8" fill="#d0d0d8"/><rect x="217" y="528.2" width="2" height="1.8" fill="#d0d0d8"/><rect x="217" y="539.7" width="2" height="1.8" fill="#d0d0d8"/><circle cx="218" cy="398" r="11.6" fill="#ffffff" stroke="#dcdcdc" stroke-width="0.8"/><path d="M212,398 H224 M218,392 V404" stroke="#6b6b7b" stroke-width="2.4" fill="none"/><rect x="206.2" y="499" width="23.4" height="9.8" fill="#f2f2f2" stroke="#d4d4d4" stroke-width="0.8"/><circle cx="218" cy="559" r="11.6" fill="#ffffff" stroke="#dcdcdc" stroke-width="0.8"/><path d="M212,559 H224" stroke="#8a8a8a" stroke-width="2.4" fill="none"/><rect x="204.5" y="580.5" width="27.5" height="31" fill="#ffffff" stroke="#d0d0d0" stroke-width="1"/><circle cx="218.2" cy="596" r="8.6" fill="none" stroke="#8a8a8a" stroke-width="1.3"/><path d="M218.2,584.5 V590.5 M218.2,601.5 V607.5 M206.7,596 H212.7 M223.7,596 H229.7" stroke="#8a8a8a" stroke-width="1.3" fill="none"/><rect x="248" y="622" width="21" height="20.5" fill="#ffffff" stroke="#d0d0d0" stroke-width="1"/><path d="M264.5,639 L253,627.5 M252.5,636 V627 H261.5" fill="none" stroke="#6a6a6a" stroke-width="2.6"/></svg>
<svg style="left:252px;top:673px;" width="12" height="20" viewBox="0.00 0.00 12 20"><circle cx="6" cy="4" r="1.3" fill="#f4f4f4"/><circle cx="6" cy="9.7" r="1.3" fill="#f4f4f4"/><circle cx="6" cy="15.4" r="1.3" fill="#f4f4f4"/></svg>
<div class="b" style="left:-5px;top:717.5px;width:262.5px;height:41.0px;border:1px solid #4a4a4a;border-right-color:#424242;"></div>
<div class="b" style="left:-5px;top:808.5px;width:249.5px;height:91.5px;background:#262626;"></div>
<div class="b" style="left:244px;top:770px;width:1px;height:38px;background:#444444;"></div>
<svg style="left:220px;top:779px;" width="12" height="19" viewBox="220.00 779.00 12 19"><path d="M221.8,785.3 L226,781.0999999999999 L230.2,785.3 M221.8,791.3 L226,795.5 L230.2,791.3" fill="none" stroke="#f4f4f4" stroke-width="1.3"/></svg>
<svg style="left:248px;top:818px;" width="14" height="80" viewBox="0.00 0.00 14 80"><path d="M7,1.5 L12.5,10.5 H1.5 Z" fill="#4a4a4a"/><rect x="1.3" y="22" width="11.4" height="70" rx="5.7" fill="#515151"/></svg>
</body></html>
